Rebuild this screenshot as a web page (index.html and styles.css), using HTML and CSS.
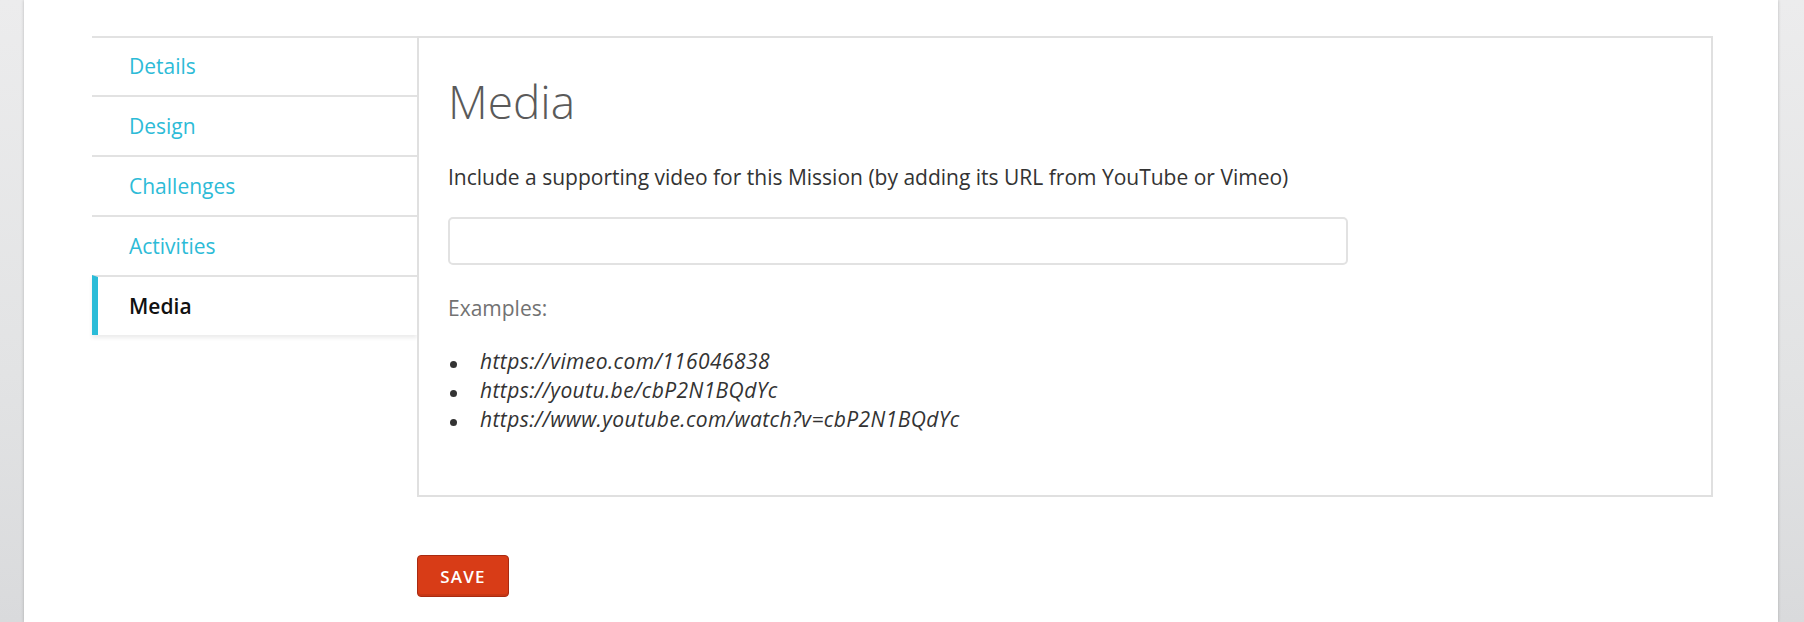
FILE: index.html
```html
<!DOCTYPE html>
<html lang="en">
<head>
<meta charset="utf-8">
<title>Media</title>
<link rel="stylesheet" href="styles.css">
</head>
<body>
<div class="page">
  <div class="editor">
    <nav class="side-nav">
      <a class="nav-item first" href="#">Details</a>
      <a class="nav-item" href="#">Design</a>
      <a class="nav-item" href="#">Challenges</a>
      <a class="nav-item" href="#">Activities</a>
      <a class="nav-item active" href="#">Media</a>
    </nav>
    <div class="main-col">
      <section class="panel">
        <h1 class="panel-title">Media</h1>
        <p class="panel-desc">Include a supporting video for this Mission (by adding its URL from YouTube or Vimeo)</p>
        <input class="url-input" type="text">
        <p class="examples-label">Examples:</p>
        <ul class="examples">
          <li class="example">https://vimeo.com/116046838</li>
          <li class="example">https://youtu.be/cbP2N1BQdYc</li>
          <li class="example">https://www.youtube.com/watch?v=cbP2N1BQdYc</li>
        </ul>
      </section>
      <button class="save-btn" type="button">SAVE</button>
    </div>
  </div>
</div>
</body>
</html>
```
FILE: styles.css
```css
html, body {
  margin: 0;
  padding: 0;
}
body {
  height: 622px;
  overflow: hidden;
  background: linear-gradient(to bottom, #ececed 0%, #e2e3e4 60%, #d9dadc 100%);
  font-family: "Open Sans", "Liberation Sans", sans-serif;
}
.page {
  margin: 0 26px 0 24px;
  height: 622px;
  background: #ffffff;
  box-shadow: 0 0 3px rgba(0, 0, 0, 0.22);
  padding: 36px 65px 0 68px;
  box-sizing: border-box;
}
.editor {
  display: flex;
  align-items: flex-start;
}
.side-nav {
  width: 325px;
  flex: none;
  display: flex;
  flex-direction: column;
}
.nav-item {
  display: flex;
  align-items: center;
  height: 58px;
  border-top: 2px solid #e2e2e2;
  padding-left: 37px;
  font-size: 21px;
  line-height: 29px;
  color: #2dbbd7;
  text-decoration: none;
}
.nav-item.first {
  height: 57px;
}
.nav-item.active {
  color: #111111;
  font-weight: 600;
  border-left: 6px solid #2bbcd8;
  padding-left: 31px;
  box-shadow: 0 3px 4px rgba(0, 0, 0, 0.08);
}
.main-col {
  flex: 1;
  display: flex;
  flex-direction: column;
  align-items: flex-start;
}
.panel {
  align-self: stretch;
  border: 2px solid #e0e0e0;
  padding: 35px 30px 61px 29px;
}
.panel-title {
  margin: 0;
  font-size: 46px;
  line-height: 56px;
  font-weight: 300;
  color: #5a5a5a;
}
.panel-desc {
  margin: 34px 0 0;
  font-size: 21px;
  line-height: 29px;
  color: #333333;
}
.url-input {
  display: block;
  margin-top: 25px;
  width: 900px;
  height: 48px;
  box-sizing: border-box;
  border: 2px solid #e2e2e2;
  border-radius: 5px;
  background: #ffffff;
  font-family: inherit;
  font-size: 21px;
  outline: none;
}
.examples-label {
  margin: 29px 0 0;
  font-size: 21px;
  line-height: 29px;
  color: #727272;
}
.examples {
  list-style: none;
  margin: 24px 0 0;
  padding: 0;
}
.example {
  display: flex;
  align-items: center;
  font-size: 21px;
  line-height: 29px;
  font-style: italic;
  letter-spacing: 0.4px;
  color: #333333;
}
.example::before {
  content: "";
  width: 7px;
  height: 7px;
  border-radius: 50%;
  background: #333333;
  margin: 5px 23px 0 2px;
  flex: none;
}
.save-btn {
  margin-top: 58px;
  width: 92px;
  height: 42px;
  box-sizing: border-box;
  border: 1px solid #a92a10;
  border-radius: 4px;
  background: #d83c17;
  box-shadow: inset 0 -2px 0 rgba(0, 0, 0, 0.08);
  color: #ffffff;
  font-family: inherit;
  font-size: 17px;
  font-weight: 600;
  letter-spacing: 1.2px;
  padding: 0;
  cursor: pointer;
}
```
